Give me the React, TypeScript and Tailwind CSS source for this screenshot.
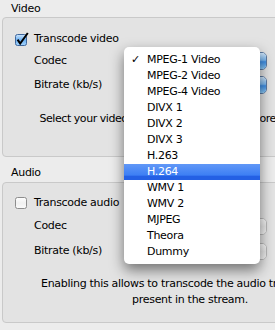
const codecs = [
  "MPEG-1 Video",
  "MPEG-2 Video",
  "MPEG-4 Video",
  "DIVX 1",
  "DIVX 2",
  "DIVX 3",
  "H.263",
  "H.264",
  "WMV 1",
  "WMV 2",
  "MJPEG",
  "Theora",
  "Dummy"
]

const Checkbox = (props: { checked: boolean }) => {
  if (props.checked)
    return (
      <svg width="14" height="14" viewBox="0 0 14 14" className="shrink-0">
        <defs>
          <linearGradient id="cbOn" x1="0" y1="0" x2="0" y2="1">
            <stop offset="0" stopColor="#cfe6fc" />
            <stop offset="0.5" stopColor="#6cb0f1" />
            <stop offset="1" stopColor="#a6d5fc" />
          </linearGradient>
        </defs>
        <rect x="0.5" y="2.5" width="11" height="11" rx="2" fill="url(#cbOn)" stroke="#3f679c" />
        <path d="M2.6 7.6 L5.2 11.6 L12.8 1" stroke="#000" strokeWidth="2" fill="none" />
      </svg>
    )
  return (
    <svg width="14" height="14" viewBox="0 0 14 14" className="shrink-0">
      <defs>
        <linearGradient id="cbOff" x1="0" y1="0" x2="0" y2="1">
          <stop offset="0" stopColor="#ffffff" />
          <stop offset="0.5" stopColor="#f0f0f0" />
          <stop offset="1" stopColor="#fafafa" />
        </linearGradient>
      </defs>
      <rect x="0.5" y="1.5" width="11" height="11" rx="2" fill="url(#cbOff)" stroke="#8d8d8d" />
    </svg>
  )
}

const PopupButton = (props: { enabled: boolean }) => (
  <div
    className={
      props.enabled
        ? "flex h-[18px] w-[134px] overflow-hidden rounded-[5px] border border-[#5b7aa3] bg-white"
        : "flex h-[17px] w-[134px] overflow-hidden rounded-[5px] border border-[#b9b9b9] bg-[#f2f2f2]"
    }
  >
    <div className="flex-1" />
    <div
      className={
        props.enabled
          ? "w-[18px] bg-[linear-gradient(#cfe6fb_0%,#7db9f0_45%,#3f8fe6_55%,#8ccaf8_100%)]"
          : "w-[18px] bg-[linear-gradient(#fafafa_0%,#e9e9e9_50%,#f4f4f4_100%)]"
      }
    />
  </div>
)

const Row = (props: { label: string; enabled: boolean; className?: string }) => (
  <div className={"flex h-[20px] items-center pl-[31px] " + (props.className || "")}>
    <span className="w-[99px]">{props.label}</span>
    <PopupButton enabled={props.enabled} />
  </div>
)

const App = () => {
  return (
    <div className="relative h-[330px] w-[275px] overflow-hidden bg-[#ececec] font-['DejaVu_Sans',sans-serif] text-[11px] tracking-[-0.3px] text-black">
      <div className="w-[380px] pl-[2px]">
        <div className="h-[17px] pl-[9px] pt-[2px] leading-[14px]">Video</div>
        <div className="h-[140px] w-[376px] rounded-[4px] border border-[#c9c9c9] bg-[#e3e3e3]">
          <div className="mt-[11px] flex h-[20px] items-center gap-[5px] pl-[12px]">
            <Checkbox checked />
            <span>Transcode video</span>
          </div>
          <Row label="Codec" enabled className="mt-[2px]" />
          <Row label="Bitrate (kb/s)" enabled className="mt-[4px]" />
          <div className="mt-[16px] whitespace-nowrap text-center leading-[16px] tracking-[-0.45px]">
            Select your video codec. Click one to get more information.
          </div>
        </div>

        <div className="h-[25px] pl-[9px] pt-[9px] leading-[14px]">Audio</div>
        <div className="h-[141px] w-[376px] rounded-[4px] border border-[#c9c9c9] bg-[#e3e3e3]">
          <div className="mt-[10px] flex h-[20px] items-center gap-[5px] pl-[12px]">
            <Checkbox checked={false} />
            <span>Transcode audio</span>
          </div>
          <Row label="Codec" enabled={false} className="mt-[3px]" />
          <Row label="Bitrate (kb/s)" enabled={false} className="mt-[5px]" />
          <div className="mt-[15px] flex flex-col items-center whitespace-nowrap leading-[16px]">
            <span>Enabling this allows to transcode the audio track if one is</span>
            <span>present in the stream.</span>
          </div>
        </div>
      </div>

      {/* codec dropdown menu */}
      <div className="absolute left-[124px] top-[47px] w-[136px] rounded-[5px] bg-white pb-[4px] pt-[5px] shadow-[0_6px_14px_rgba(0,0,0,0.5)]">
        {codecs.map((c, i) => (
          <div
            key={c}
            className={
              i === 7
                ? "relative h-[16px] bg-[linear-gradient(#6198f7_0%,#3d7ff4_70%,#2460e4_76%,#2460e4_100%)] pl-[23px] leading-[16px] text-white"
                : "relative h-[16px] pl-[23px] leading-[16px]"
            }
          >
            {i === 0 && <span className="absolute left-[7px] top-0">✓</span>}
            {c}
          </div>
        ))}
      </div>
    </div>
  )
}

export default App
